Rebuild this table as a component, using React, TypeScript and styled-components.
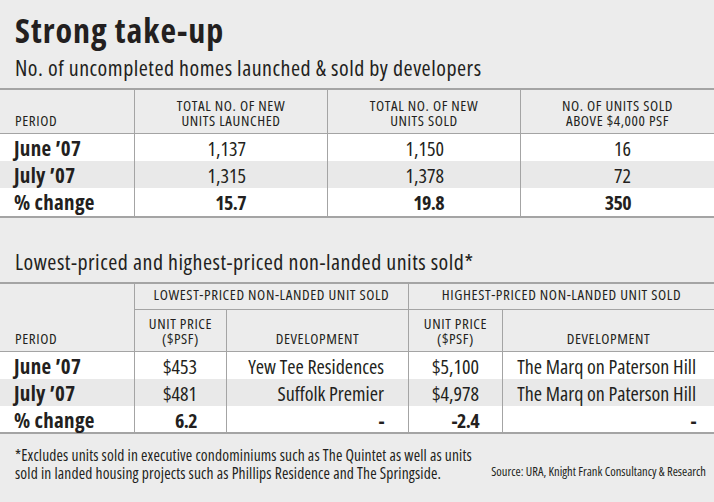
import React from "react";
import styled, { createGlobalStyle } from "styled-components";

const FONT = `"Open Sans", "Liberation Sans", sans-serif`;
const INK = "#231f20";
const LINE = "#a4a4a4";

const Global = createGlobalStyle`
  html, body { margin: 0; padding: 0; background: #ececec; }
  body { font-family: ${FONT}; font-stretch: 75%; color: ${INK}; }
`;

const Page = styled.div`
  width: 714px;
  height: 502px;
  background: #ececec;
  display: flex;
  flex-direction: column;
  overflow: hidden;
`;

const Title = styled.h1`
  margin: 12px 0 0;
  padding: 0 15px;
  font-size: 34px;
  line-height: 37px;
  font-weight: 700;
  letter-spacing: 1px;
`;

const Subtitle = styled.h2<{ $top: number }>`
  margin: ${(p) => p.$top}px 0 0;
  padding: 0 15px;
  font-size: 22px;
  line-height: 24px;
  font-weight: 400;
  letter-spacing: 0.5px;
`;

const Table = styled.div<{ $top: number }>`
  margin-top: ${(p) => p.$top}px;
  border-top: 2px solid ${LINE};
  border-bottom: 2px solid ${LINE};
`;

const Row = styled.div<{ $cols: string; $h: number; $bg?: string; $rule?: boolean }>`
  display: grid;
  grid-template-columns: ${(p) => p.$cols};
  height: ${(p) => p.$h}px;
  background: ${(p) => p.$bg ?? "transparent"};
  border-bottom: ${(p) => (p.$rule ? `1px solid ${LINE}` : "none")};
`;

const HeadGrid = styled.div<{ $cols: string; $rows: string }>`
  display: grid;
  grid-template-columns: ${(p) => p.$cols};
  grid-template-rows: ${(p) => p.$rows};
  border-bottom: 1px solid ${LINE};
`;

const HeadCell = styled.div<{ $first?: boolean; $col?: string; $row?: string; $rule?: boolean; $align?: string }>`
  grid-column: ${(p) => p.$col ?? "auto"};
  grid-row: ${(p) => p.$row ?? "auto"};
  border-left: ${(p) => (p.$first ? "none" : `1px solid ${LINE}`)};
  border-bottom: ${(p) => (p.$rule ? `1px solid ${LINE}` : "none")};
  display: flex;
  flex-direction: column;
  justify-content: ${(p) => p.$align ?? "flex-end"};
  align-items: ${(p) => (p.$first ? "flex-start" : "center")};
  padding: ${(p) => (p.$first ? "0 0 5px 15px" : "0 2px 5px")};
  font-size: 15px;
  line-height: 15px;
  letter-spacing: 0.6px;
  text-transform: uppercase;
  text-align: center;
  white-space: nowrap;
`;

const Label = styled.div`
  display: flex;
  align-items: center;
  padding-left: 14px;
  font-size: 21px;
  font-weight: 700;
  letter-spacing: 0.3px;
`;

const Value = styled.div<{ $pad: number; $bold?: boolean }>`
  display: flex;
  align-items: center;
  justify-content: flex-end;
  padding-right: ${(p) => p.$pad}px;
  border-left: 1px solid ${LINE};
  font-size: 20px;
  font-weight: ${(p) => (p.$bold ? 700 : 400)};
  letter-spacing: ${(p) => (p.$bold ? "-0.6px" : "0")};
  white-space: nowrap;
`;

const Footer = styled.div`
  margin-top: 12px;
  display: flex;
  justify-content: space-between;
  align-items: flex-end;
  padding: 0 8px 0 15px;
`;

const Note = styled.p`
  margin: 0;
  font-size: 15.5px;
  line-height: 18px;
  letter-spacing: 0.15px;
  white-space: nowrap;
`;

const Source = styled.p`
  margin: 0 0 1px;
  font-size: 12.5px;
  line-height: 18px;
  white-space: nowrap;
`;

const COLS1 = "134px 193px 193px 1fr";
const PAD1 = [81, 76, 83];

const rows1 = [
  { label: "June \u201907", vals: ["1,137", "1,150", "16"], bg: "#ffffff", h: 27 },
  { label: "July \u201907", vals: ["1,315", "1,378", "72"], bg: "#e9e9e9", h: 27 },
  { label: "% change", vals: ["15.7", "19.8", "350"], bg: "#ffffff", h: 28, bold: true },
];

const COLS2 = "134px 92px 182px 94px 1fr";
const PAD2 = [29, 24, 23, 18];

const rows2 = [
  { label: "June \u201907", vals: ["$453", "Yew Tee Residences", "$5,100", "The Marq on Paterson Hill"], bg: "#ffffff", h: 27 },
  { label: "July \u201907", vals: ["$481", "Suffolk Premier", "$4,978", "The Marq on Paterson Hill"], bg: "#e9e9e9", h: 27 },
  { label: "% change", vals: ["6.2", "-", "-2.4", "-"], bg: "#ffffff", h: 26, bold: true },
];

export default function App() {
  return (
    <Page>
      <Global />
      <Title>Strong take-up</Title>
      <Subtitle $top={6}>No. of uncompleted homes launched &amp; sold by developers</Subtitle>

      <Table $top={9}>
        <Row $cols={COLS1} $h={43} $rule>
          <HeadCell $first>Period</HeadCell>
          <HeadCell>
            <span>Total no. of new</span>
            <span>units launched</span>
          </HeadCell>
          <HeadCell>
            <span>Total no. of new</span>
            <span>units sold</span>
          </HeadCell>
          <HeadCell>
            <span>No. of units sold</span>
            <span>above $4,000 psf</span>
          </HeadCell>
        </Row>
        {rows1.map((r) => (
          <Row key={r.label} $cols={COLS1} $h={r.h} $bg={r.bg}>
            <Label>{r.label}</Label>
            {r.vals.map((v, i) => (
              <Value key={i} $pad={PAD1[i]} $bold={r.bold}>
                {v}
              </Value>
            ))}
          </Row>
        ))}
      </Table>

      <Subtitle $top={31}>Lowest-priced and highest-priced non-landed units sold*</Subtitle>

      <Table $top={9}>
        <HeadGrid $cols={COLS2} $rows="26px 41px">
          <HeadCell $first $row="1 / 3">Period</HeadCell>
          <HeadCell $col="2 / 4" $rule $align="center">
            <span>Lowest-priced non-landed unit sold</span>
          </HeadCell>
          <HeadCell $col="4 / 6" $rule $align="center">
            <span>Highest-priced non-landed unit sold</span>
          </HeadCell>
          <HeadCell>
            <span>Unit price</span>
            <span>($psf)</span>
          </HeadCell>
          <HeadCell>
            <span>Development</span>
          </HeadCell>
          <HeadCell>
            <span>Unit price</span>
            <span>($psf)</span>
          </HeadCell>
          <HeadCell>
            <span>Development</span>
          </HeadCell>
        </HeadGrid>
        {rows2.map((r) => (
          <Row key={r.label} $cols={COLS2} $h={r.h} $bg={r.bg}>
            <Label>{r.label}</Label>
            {r.vals.map((v, i) => (
              <Value key={i} $pad={PAD2[i]} $bold={r.bold}>
                {v}
              </Value>
            ))}
          </Row>
        ))}
      </Table>

      <Footer>
        <Note>
          *Excludes units sold in executive condominiums such as The Quintet as well as units
          <br />
          sold in landed housing projects such as Phillips Residence and The Springside.
        </Note>
        <Source>Source: URA, Knight Frank Consultancy &amp; Research</Source>
      </Footer>
    </Page>
  );
}
